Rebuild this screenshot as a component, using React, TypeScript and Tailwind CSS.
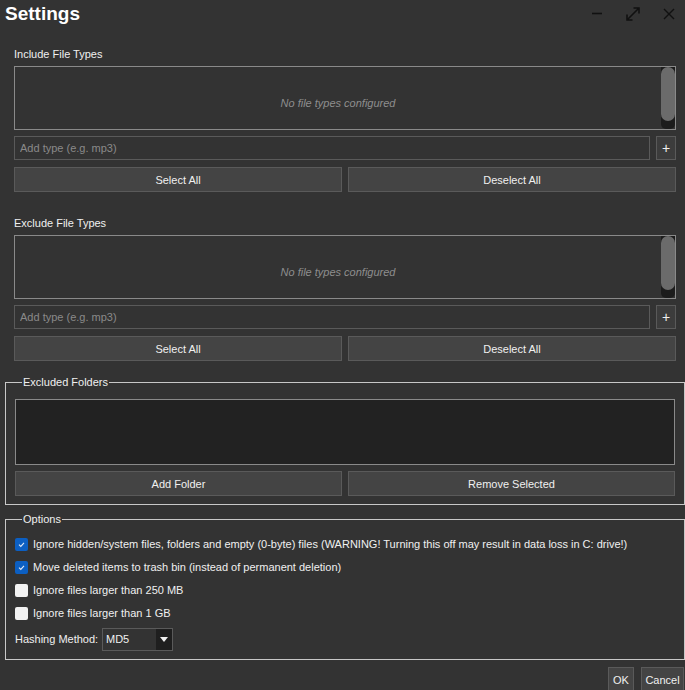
import type { ReactNode } from "react";

const font = { fontFamily: '"Liberation Sans", Arial, sans-serif' };

function Btn({ children, className = "" }: { children: ReactNode; className?: string }) {
  return (
    <button
      className={`flex h-[25px] items-center justify-center border border-[#5a5a5a] bg-[#444444] pt-[1px] text-[11px] text-[#f0f0f0] ${className}`}
    >
      {children}
    </button>
  );
}

function TypeList({ label }: { label: string }) {
  return (
    <div className="flex flex-col">
      <div className="mb-[4px] h-[16px] text-[11px] leading-[16px] text-[#f0f0f0]">{label}</div>
      {/* list with scrollbar */}
      <div className="flex h-[64px] border border-[#8a8a8a] bg-[#333333]">
        <div className="flex flex-1 items-center justify-center pt-[10px] text-[11px] italic text-[#8e8e8e]">
          No file types configured
        </div>
        <div className="flex w-[14px] flex-col rounded-b-[5px] bg-[#1c1c1c]">
          <div className="h-[54px] w-full rounded-full bg-[#6b6b6b]" />
        </div>
      </div>
      <div className="mt-[6px] flex h-[24px] gap-[6px]">
        <input
          placeholder="Add type (e.g. mp3)"
          className="h-full flex-1 border border-[#5a5a5a] bg-[#333333] px-[5px] text-[11px] text-[#f0f0f0] outline-none placeholder:text-[#8a8a8a]"
        />
        <button className="flex h-full w-[20px] items-center justify-center border border-[#5a5a5a] bg-[#3c3c3c] text-[14px] leading-none text-[#f0f0f0]">
          +
        </button>
      </div>
      <div className="mt-[7px] grid grid-cols-2 gap-[6px]">
        <Btn>Select All</Btn>
        <Btn>Deselect All</Btn>
      </div>
    </div>
  );
}

function Check({ checked, label }: { checked: boolean; label: string }) {
  return (
    <div className="flex h-[23px] items-center gap-[5px]">
      {checked ? (
        <span className="flex h-[13px] w-[13px] items-center justify-center rounded-[2px] bg-[#0c5fc2]">
          <svg width="9" height="9" viewBox="0 0 9 9" fill="none">
            <path d="M2 4.6 L3.8 6.4 L7 2.8" stroke="#dfe9f7" strokeWidth="1.1" />
          </svg>
        </span>
      ) : (
        <span className="h-[13px] w-[13px] rounded-[2px] bg-[#f2f2f2]" />
      )}
      <span className="text-[11px] text-[#f0f0f0]">{label}</span>
    </div>
  );
}

export default function App() {
  return (
    <div className="relative h-[690px] w-[685px] overflow-hidden bg-[#333333]" style={font}>
      {/* title bar */}
      <div className="flex h-[30px] items-start justify-between">
        <div className="pl-[5px] pt-[2px] text-[19px] font-bold leading-[24px] text-white">Settings</div>
        <div className="flex items-start gap-0 pr-[10px] pt-[6px]">
          <svg width="12" height="14" viewBox="0 0 12 14" className="mr-[22px]">
            <path d="M1 7.5 H11" stroke="#111" strokeWidth="1.6" />
          </svg>
          <svg width="16" height="16" viewBox="0 0 16 16" className="mr-[22px]">
            <path d="M2 14 L14 2 M8.5 2 H14 V7.5 M2 8.5 V14 H7.5" stroke="#111" strokeWidth="1.6" fill="none" />
          </svg>
          <svg width="12" height="14" viewBox="0 0 12 14">
            <path d="M1 3 L11 13 M11 3 L1 13" stroke="#111" strokeWidth="1.4" />
          </svg>
        </div>
      </div>

      <div className="flex flex-col pl-[14px] pr-[9px]">
        <div className="mt-[16px]">
          <TypeList label="Include File Types" />
        </div>
        <div className="mt-[23px]">
          <TypeList label="Exclude File Types" />
        </div>
      </div>

      <fieldset className="ml-[5px] mt-[14px] w-[680px] border border-[#c8c8c8] px-[9px] pb-[8px] pt-[10px]">
        <legend className="ml-[7px] px-[1px] text-[11px] leading-[14px] text-[#f0f0f0]">Excluded Folders</legend>
        <div className="h-[66px] border border-[#8a8a8a] bg-[#222222]" />
        <div className="mt-[6px] grid grid-cols-2 gap-[6px]">
          <Btn>Add Folder</Btn>
          <Btn>Remove Selected</Btn>
        </div>
      </fieldset>

      <fieldset className="ml-[5px] mt-[7px] w-[680px] border border-[#c8c8c8] px-[9px] pb-[8px] pt-[7px]">
        <legend className="ml-[7px] px-[1px] text-[11px] leading-[14px] text-[#f0f0f0]">Options</legend>
        <Check
          checked
          label="Ignore hidden/system files, folders and empty (0-byte) files (WARNING! Turning this off may result in data loss in C: drive!)"
        />
        <Check checked label="Move deleted items to trash bin (instead of permanent deletion)" />
        <Check checked={false} label="Ignore files larger than 250 MB" />
        <Check checked={false} label="Ignore files larger than 1 GB" />
        <div className="mt-[3px] flex h-[23px] items-center">
          <span className="w-[87px] text-[11px] text-[#f0f0f0]">Hashing Method:</span>
          <div className="flex h-[23px] w-[71px] items-center border border-[#5a5a5a] bg-[#333333]">
            <span className="flex-1 pl-[3px] text-[11px] text-[#f0f0f0]">MD5</span>
            <span className="flex h-full w-[16px] items-center justify-center bg-[#1f1f1f]">
              <svg width="8" height="5" viewBox="0 0 8 5">
                <path d="M0 0 H8 L4 5 Z" fill="#f0f0f0" />
              </svg>
            </span>
          </div>
        </div>
      </fieldset>

      <div className="mt-[7px] flex justify-end gap-[7px] pr-[1px]">
        <Btn className="h-[26px] w-[26px]">OK</Btn>
        <Btn className="h-[26px] w-[43px]">Cancel</Btn>
      </div>
    </div>
  );
}
